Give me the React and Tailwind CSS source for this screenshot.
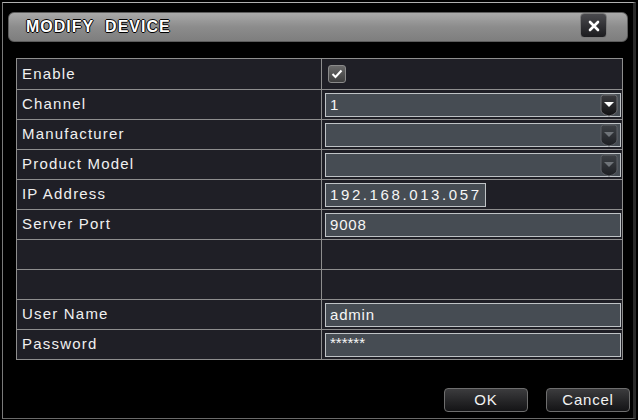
import React from 'react';

const rows = [
  { label: 'Enable', kind: 'check' },
  { label: 'Channel', kind: 'select', value: '1', active: true },
  { label: 'Manufacturer', kind: 'select', value: '' },
  { label: 'Product Model', kind: 'select', value: '' },
  { label: 'IP Address', kind: 'ip', value: '192.168.013.057' },
  { label: 'Server Port', kind: 'input', value: '9008' },
  { label: '', kind: 'empty' },
  { label: '', kind: 'empty' },
  { label: 'User Name', kind: 'input', value: 'admin' },
  { label: 'Password', kind: 'input', value: '******' },
];

function Arrow({ active }) {
  return (
    <svg width="18" height="23" viewBox="0 0 18 23" className="shrink-0 -mb-[2px]">
      <defs>
        <linearGradient id={active ? 'ga' : 'gi'} x1="0" y1="0" x2="0" y2="1">
          <stop offset="0" stopColor={active ? '#3c3c40' : '#3e4146'} />
          <stop offset="1" stopColor={active ? '#111113' : '#1e2024'} />
        </linearGradient>
      </defs>
      <path
        d="M3.5 1 H14.5 Q17 1 17 3.5 V16 Q17 20 9 22 Q1 20 1 16 V3.5 Q1 1 3.5 1 Z"
        fill={`url(#${active ? 'ga' : 'gi'})`}
        stroke={active ? '#707074' : '#5e6166'}
        strokeWidth="1"
      />
      <path d="M4 8 H14 L9 13 Z" fill={active ? '#ffffff' : '#6f7378'} />
    </svg>
  );
}

function Field({ row }) {
  if (row.kind === 'check') {
    return (
      <div className="w-[18px] h-[18px] ml-[6px] rounded-[3px] border border-[#8a8a8a] bg-gradient-to-b from-[#6a6a6a] to-[#3e3e3e] flex items-center justify-center">
        <svg width="12" height="10" viewBox="0 0 12 10">
          <path d="M1.5 5 L4.5 8 L10.5 1.5" fill="none" stroke="#fff" strokeWidth="2" />
        </svg>
      </div>
    );
  }
  if (row.kind === 'empty') return null;
  const narrow = row.kind === 'ip';
  return (
    <div
      className={`h-[24px] ${narrow ? 'w-[161px]' : 'w-[296px]'} ml-[3px] border border-[#bfc3c6] bg-[#464c53] flex items-center justify-between pl-[4px] pr-[2px]`}
    >
      <span
        className={`text-[#f6f6f6] text-[15px] leading-none ${
          narrow ? 'tracking-[2.6px]' : row.value === '******' ? 'tracking-[0px] text-[12px] -mt-[4px]' : 'tracking-[0.8px]'
        }`}
      >
        {row.value}
      </span>
      {row.kind === 'select' && <Arrow active={row.active} />}
    </div>
  );
}

export default function App() {
  return (
    <div className="w-[638px] h-[420px] bg-black pt-[2px] pl-[2px] pr-[2px] pb-[1px] font-['Liberation_Sans',Arial,sans-serif]">
      <div className="h-full border-t border-l border-b border-r-[3px] border-t-[#b0b0b0] border-l-[#7a7a7a] border-b-[#6a6a6a] border-r-[#2a2a2a] bg-black flex flex-col">
        <div className="mx-[5px] mt-[9px] h-[30px] rounded-[6px] bg-gradient-to-b from-[#a9a9a9] via-[#8c8c8c] to-[#7e7e7e] border border-[#5c5c5c] flex items-center justify-between pl-[17px] pr-[20px]">
          <span className="text-white font-bold text-[16px] tracking-[1px] [text-shadow:1px_0_0_#000,-1px_0_0_#000,0_1px_0_#000,0_-1px_0_#000]">
            MODIFY&nbsp; DEVICE
          </span>
          <div className="w-[27px] h-[25px] -mt-[3px] rounded-[4px] bg-gradient-to-b from-[#4a4a4e] to-[#1c1c1f] border border-[#7a7a7a] flex items-center justify-center">
            <svg width="12" height="12" viewBox="0 0 12 12">
              <path d="M2 2 L10 10 M10 2 L2 10" stroke="#fff" strokeWidth="2.6" strokeLinecap="round" />
            </svg>
          </div>
        </div>

        <div className="mt-[16px] ml-[13px] w-[607px] border border-[#8e8e8e] bg-[#1f1f26]">
          {rows.map((row, i) => (
            <div key={i} className={`flex h-[30px] ${i > 0 ? 'border-t border-[#8e8e8e]' : ''}`}>
              <div className="w-[305px] border-r border-[#8e8e8e] flex items-center pl-[5px]">
                <span className="text-[#f0f0f0] text-[15px] tracking-[1.2px]">{row.label}</span>
              </div>
              <div className="flex-1 flex items-center">
                <Field row={row} />
              </div>
            </div>
          ))}
        </div>

        <div className="flex justify-end gap-[18px] mt-[28px] pr-[3px]">
          {['OK', 'Cancel'].map((t) => (
            <div
              key={t}
              className="w-[84px] h-[24px] rounded-[4px] border border-[#6e6e6e] bg-gradient-to-b from-[#3c3c3e] to-[#141416] flex items-center justify-center text-[#f2f2f2] text-[15px] tracking-[0.8px]"
            >
              {t}
            </div>
          ))}
        </div>
      </div>
    </div>
  );
}
